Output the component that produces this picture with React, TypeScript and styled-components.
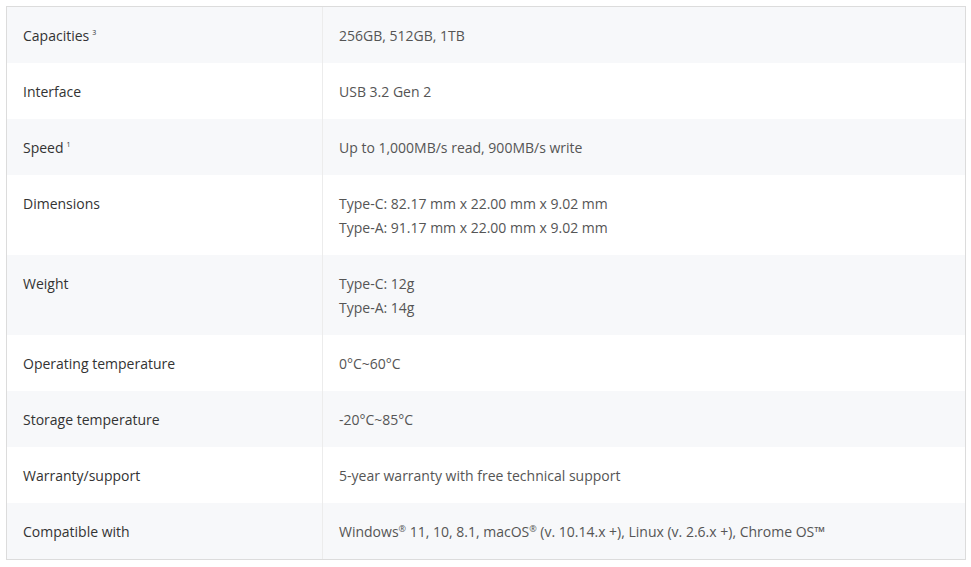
import styled, { createGlobalStyle } from "styled-components";

const GlobalStyle = createGlobalStyle`
  body {
    margin: 0;
    background: #ffffff;
    font-family: "Open Sans", "Noto Sans", sans-serif;
  }
`;

const Page = styled.div`
  padding: 6px 5px 6px 6px;
`;

const Table = styled.div`
  border: 1px solid #dcdcdc;
  font-size: 14px;
  line-height: 24px;
`;

const Row = styled.div<{ $shaded: boolean }>`
  display: grid;
  grid-template-columns: 316px 1fr;
  background: ${(p) => (p.$shaded ? "#f7f8fa" : "#ffffff")};
`;

const Label = styled.div`
  padding: 17px 16px 15px;
  color: #333333;
  border-right: 1px solid #ececec;
`;

const Value = styled.div`
  padding: 17px 16px 15px;
  color: #555555;
`;

const Note = styled.sup`
  font-size: 7px;
  margin-left: 3px;
  vertical-align: 6px;
  line-height: 0;
`;

const Mark = styled.sup`
  font-size: 9px;
  vertical-align: 5px;
  line-height: 0;
`;

type Spec = { label: string; note?: string; lines: React.ReactNode[] };

const specs: Spec[] = [
  { label: "Capacities", note: "3", lines: ["256GB, 512GB, 1TB"] },
  { label: "Interface", lines: ["USB 3.2 Gen 2"] },
  { label: "Speed", note: "1", lines: ["Up to 1,000MB/s read, 900MB/s write"] },
  {
    label: "Dimensions",
    lines: ["Type-C: 82.17 mm x 22.00 mm x 9.02 mm", "Type-A: 91.17 mm x 22.00 mm x 9.02 mm"],
  },
  { label: "Weight", lines: ["Type-C: 12g", "Type-A: 14g"] },
  { label: "Operating temperature", lines: ["0°C~60°C"] },
  { label: "Storage temperature", lines: ["-20°C~85°C"] },
  { label: "Warranty/support", lines: ["5-year warranty with free technical support"] },
  {
    label: "Compatible with",
    lines: [
      <>
        Windows<Mark>®</Mark> 11, 10, 8.1, macOS<Mark>®</Mark> (v. 10.14.x +), Linux (v. 2.6.x +), Chrome OS™
      </>,
    ],
  },
];

export default function App() {
  return (
    <>
      <GlobalStyle />
      <Page>
        <Table>
          {specs.map((s, i) => (
            <Row key={s.label} $shaded={i % 2 === 0}>
              <Label>
                {s.label}
                {s.note && <Note>{s.note}</Note>}
              </Label>
              <Value>
                {s.lines.map((l, j) => (
                  <div key={j}>{l}</div>
                ))}
              </Value>
            </Row>
          ))}
        </Table>
      </Page>
    </>
  );
}
